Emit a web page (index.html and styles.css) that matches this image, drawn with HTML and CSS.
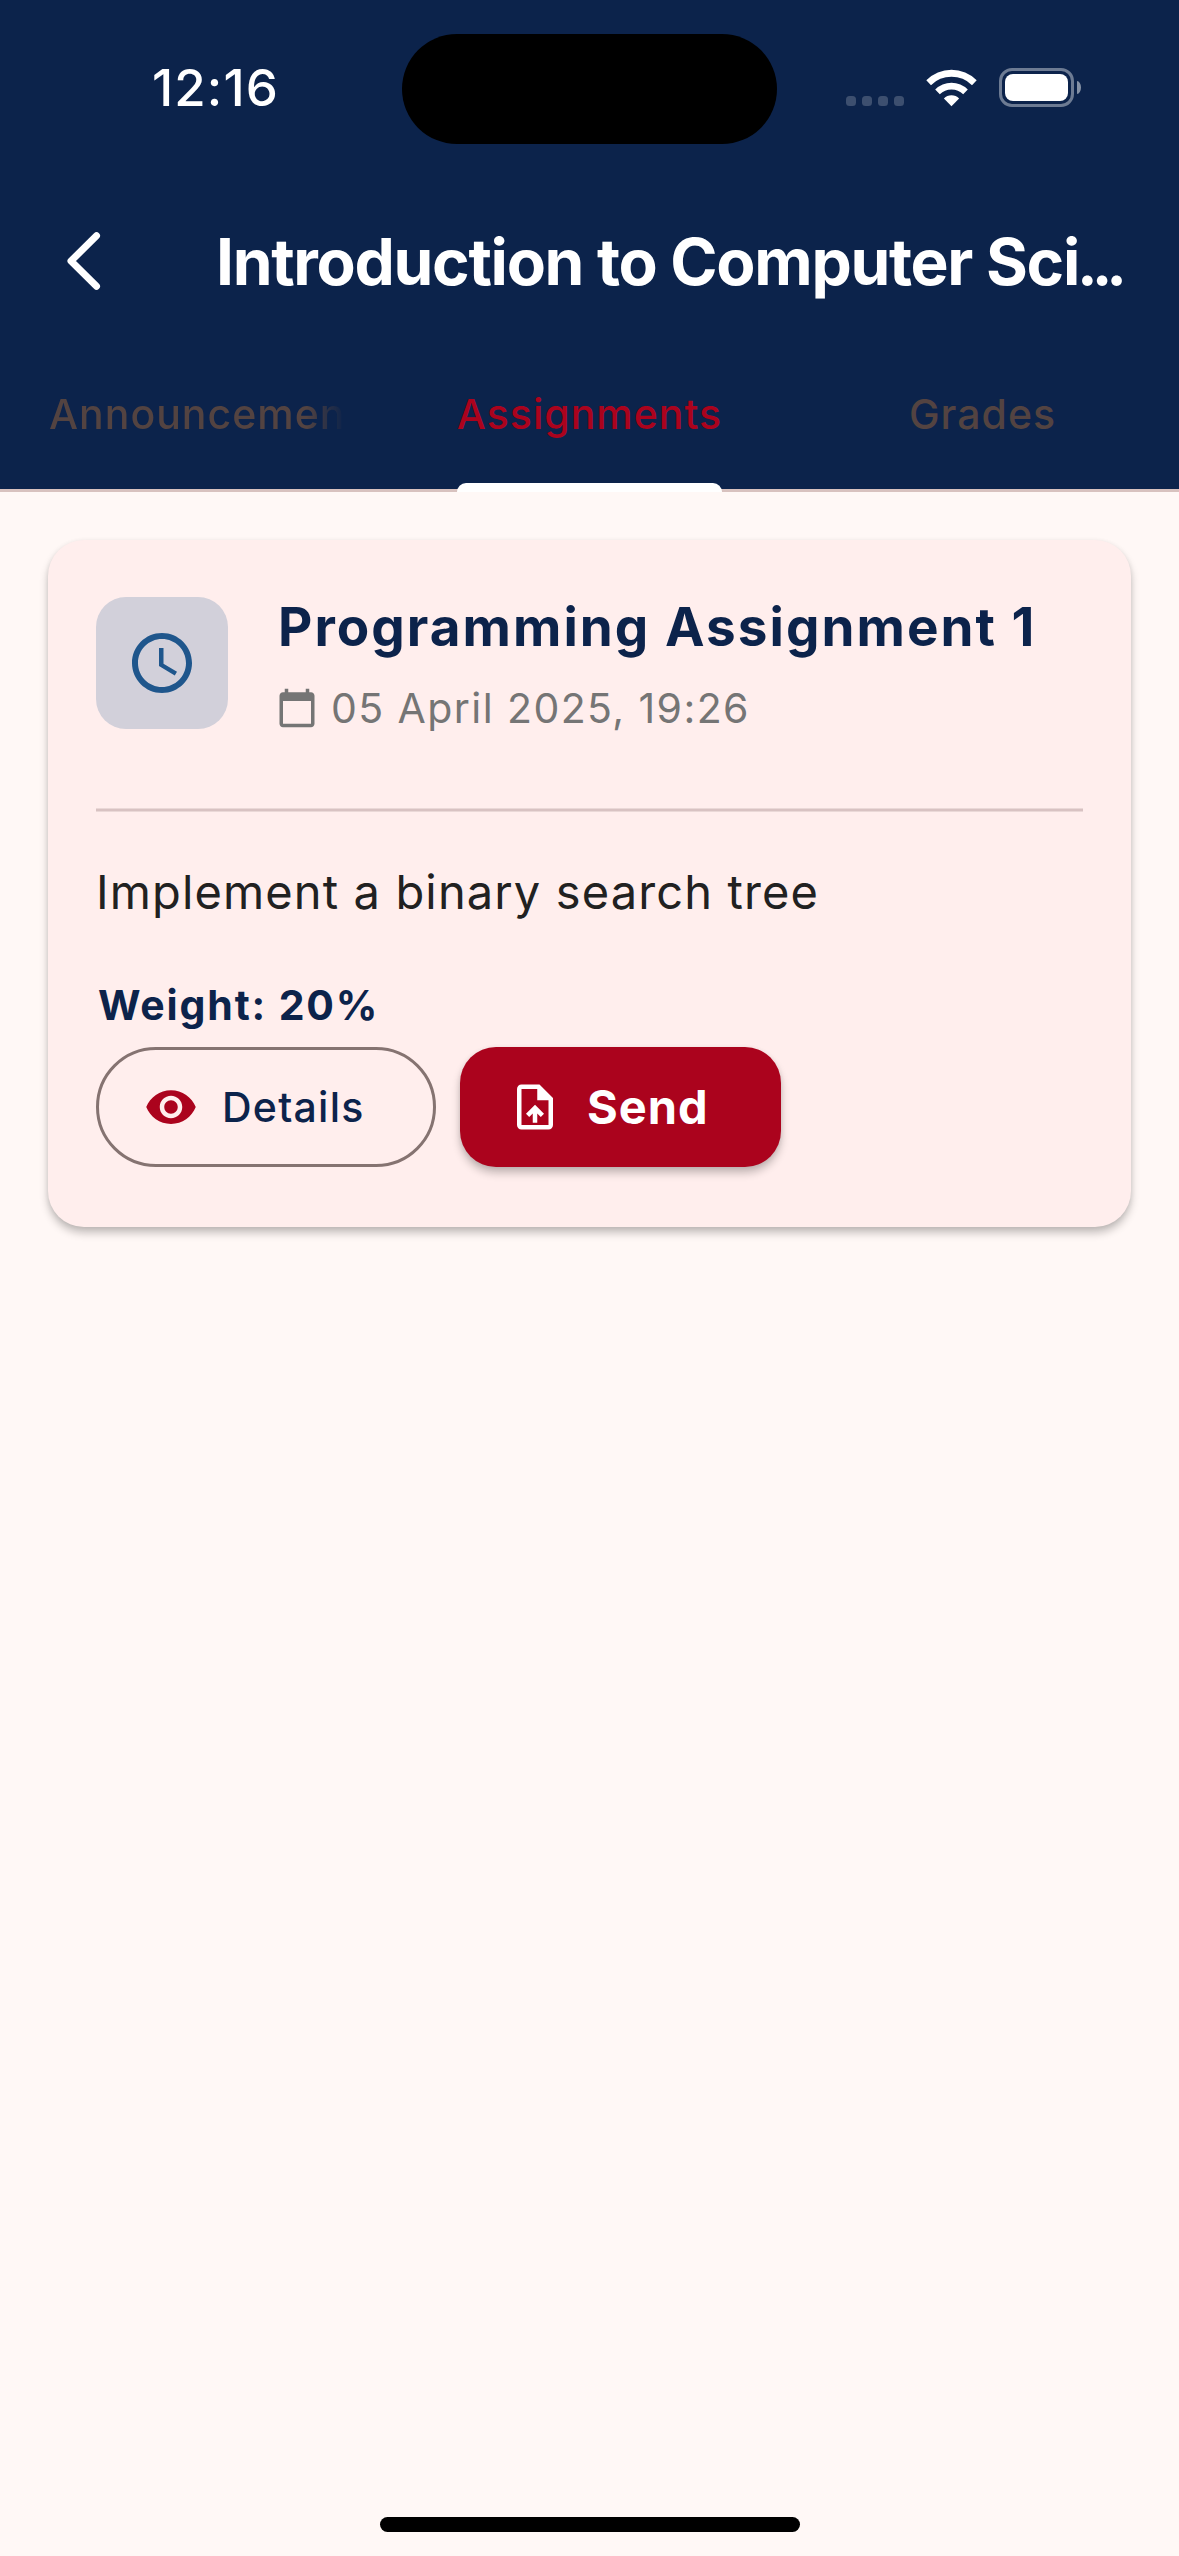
FILE: index.html
```html
<!DOCTYPE html>
<html lang="en">
<head>
<meta charset="utf-8">
<title>Introduction to Computer Science</title>
<link rel="stylesheet" href="styles.css">
</head>
<body>
<main class="screen">
  <header class="app-header">
    <div class="status-bar">
      <span class="clock">12:16</span>
      <div class="island"></div>
      <div class="indicators">
        <div class="cellular"><i class="dot"></i><i class="dot"></i><i class="dot"></i><i class="dot"></i></div>
        <svg class="wifi" viewBox="0 0 51 38" fill="#fff">
          <path d="M0.3 11.3A35.5 35.5 0 0 1 50.7 11.3L46 16.2A28.8 28.8 0 0 0 5 16.2Z"/>
          <path d="M9.2 20.4A23 23 0 0 1 41.8 20.4L37.2 25.2A16.6 16.6 0 0 0 13.8 25.2Z"/>
          <path d="M17.9 29.4A10.8 10.8 0 0 1 33.1 29.4L25.5 37.3Z"/>
        </svg>
        <div class="battery"><div class="battery-body"><div class="battery-level"></div></div><div class="battery-cap"></div></div>
      </div>
    </div>
    <div class="toolbar">
      <svg class="back" viewBox="0 0 34 58" fill="none" stroke="#fff" stroke-width="7" stroke-linecap="round" stroke-linejoin="round"><path d="M29.5 3.8L4 29L29.500 54.200"/></svg>
      <h1 class="title">Introduction to Computer Sci<span class="ellipsis">...</span></h1>
    </div>
    <nav class="tabs">
      <div class="tab"><span class="tab-label fade">Announcements</span></div>
      <div class="tab active"><span class="tab-label">Assignments</span></div>
      <div class="tab"><span class="tab-label">Grades</span></div>
    </nav>
  </header>
  <section class="content">
    <article class="card">
      <div class="card-head">
        <div class="badge"><svg viewBox="0 0 24 24" fill="#1f568c"><path d="M11.99 2C6.47 2 2 6.48 2 12s4.47 10 9.99 10C17.52 22 22 17.52 22 12S17.52 2 11.99 2zM12 20c-4.42 0-8-3.58-8-8s3.58-8 8-8 8 3.58 8 8-3.58 8-8 8zm.5-13H11v6l5.250 3.150.75-1.230-4.500-2.670z"/></svg></div>
        <div class="card-heading">
          <h2 class="card-title">Programming Assignment 1</h2>
          <div class="due">
            <svg class="calendar" viewBox="0 0 24 24" fill="#757575"><path d="M20 3h-1V1h-2v2H7V1H5v2H4c-1.100 0-2 .9-2 2v16c0 1.100.9 2 2 2h16c1.100 0 2-.9 2-2V5c0-1.100-.9-2-2-2zm0 18H4V8h16v13z"/></svg>
            <span class="due-date">05 April 2025, 19:26</span>
          </div>
        </div>
      </div>
      <div class="divider"></div>
      <p class="description">Implement a binary search tree</p>
      <p class="weight">Weight: 20%</p>
      <div class="actions">
        <button class="btn details"><svg viewBox="0 0 24 24" fill="#ab031d"><path d="M12 4.500C7 4.500 2.730 7.610 1 12c1.730 4.390 6 7.500 11 7.500s9.270-3.110 11-7.500c-1.730-4.390-6-7.500-11-7.500zM12 17c-2.760 0-5-2.240-5-5s2.240-5 5-5 5 2.240 5 5-2.240 5-5 5zm0-8c-1.660 0-3 1.340-3 3s1.340 3 3 3 3-1.340 3-3-1.340-3-3-3z"/></svg><span class="details-label">Details</span></button>
        <button class="btn send"><svg viewBox="0 0 24 24" fill="#fff"><path d="M14 2H6c-1.100 0-1.990.9-1.990 2L4 20c0 1.100.89 2 1.990 2H18c1.100 0 2-.9 2-2V8l-6-6zm4 18H6V4h7v5h5v11zM8 15.010l1.410 1.410L11 14.840V19h2v-4.160l1.590 1.590L16 15.010 12.010 11 8 15.010z"/></svg><span class="send-label">Send</span></button>
      </div>
    </article>
  </section>
  <div class="home-indicator"></div>
</main>
</body>
</html>
```
FILE: styles.css
```css
* { box-sizing: border-box; }
body { margin: 0; font-family: Inter, "Liberation Sans", sans-serif; background: #fff8f6; }
h1, h2, p { margin: 0; }
svg { display: block; flex: none; }

.screen { width: 1179px; height: 2556px; display: flex; flex-direction: column; overflow: hidden; }
.app-header { background: #0c234b; color: #fff; height: 492px; }

.status-bar { height: 177px; display: grid; grid-template-columns: 402px 375px 402px; align-items: start; }
.clock { margin: 58px 0 0 29px; text-align: center; font-size: 51px; line-height: 60px; font-weight: 550; letter-spacing: 1.1px; }
.island { height: 110px; margin-top: 34px; border-radius: 55px; background: #000; }
.indicators { display: flex; margin-top: 68px; padding-left: 69px; height: 39px; }
.cellular { display: flex; gap: 6px; padding-top: 28px; }
.dot { width: 10px; height: 10px; border-radius: 3.5px; background: #3d4f6f; }
.wifi { width: 51px; height: 38px; margin: 1px 0 0 22px; }
.battery { display: flex; align-items: center; gap: 3px; margin-left: 22px; }
.battery-body { width: 75px; height: 39px; padding: 3px; border: 3px solid #6d7b93; border-radius: 13px; }
.battery-level { height: 27px; border-radius: 8px; background: #fff; }
.battery-cap { width: 4px; height: 13px; border-radius: 0 4px 4px 0 / 0 6.5px 6.5px 0; background: #8591a5; }

.toolbar { height: 168px; display: flex; align-items: center; padding-left: 67px; }
.back { width: 34px; height: 58px; }
.title { margin: 2px 0 0 115px; font-size: 64px; line-height: 80px; font-weight: 650; white-space: nowrap; letter-spacing: -1.3px; }
.ellipsis { margin-left: -2px; font-size: 62px; letter-spacing: -6px; }

.tabs { height: 147px; display: grid; grid-template-columns: repeat(3, minmax(0, 1fr)); border-bottom: 3px solid #d8c2bf; }
.tab { display: flex; justify-content: center; padding: 0 48px; height: 147px; }
.tab-label { position: relative; height: 147px; line-height: 138px; font-size: 41px; font-weight: 500; color: #534341; white-space: nowrap; letter-spacing: 1px; }
.fade { flex: 1; min-width: 0; overflow: hidden; padding-left: 1px; -webkit-mask-image: linear-gradient(90deg, #000 87%, transparent 100%); mask-image: linear-gradient(90deg, #000 87%, transparent 100%); }
.active .tab-label { color: #ab031d; }
.active .tab-label::after { content: ""; position: absolute; inset: auto 0 0; height: 9px; border-radius: 9px 9px 0 0; background: #fff; }

.content { flex: 1; padding: 48px; }
.card { height: 687px; padding: 57px 48px 0; border-radius: 36px; background: #ffeeed; box-shadow: 0 6px 9px rgba(0,0,0,.23), 0 1px 5px rgba(0,0,0,.07); }
.card-head { display: flex; gap: 48px; height: 211px; }
.badge { width: 132px; height: 132px; padding: 30px; border-radius: 30px; background: #d2d0da; }
.badge svg { width: 72px; height: 72px; }
.card-title { margin: -8px 0 0 2px; font-size: 53px; line-height: 76px; font-weight: 700; color: #0c234b; white-space: nowrap; letter-spacing: 2.05px; }
.due { display: flex; align-items: center; gap: 13px; margin-top: 13px; height: 60px; }
.calendar { width: 42px; height: 42px; }
.due-date { font-size: 41px; line-height: 60px; color: #757575; letter-spacing: 1.42px; }
.divider { height: 4px; background: linear-gradient(#ead8d7 25%, #d8c2c2 25% 75%, #ead8d7 75%); }
.description { margin-top: 44px; font-size: 47px; line-height: 72px; color: #212121; letter-spacing: 1.13px; }
.weight { margin: 47px 0 0 2px; font-size: 41px; line-height: 60px; font-weight: 650; color: #0c234b; letter-spacing: 1.85px; }
.actions { display: flex; gap: 24px; margin-top: 12px; }
.btn { height: 120px; display: flex; align-items: center; font-family: inherit; border: 0; padding: 0; }
.btn svg { width: 54px; height: 54px; }
.details { width: 340px; padding-left: 45px; gap: 24px; border: 3px solid #857371; border-radius: 60px; background: none; color: #0c234b; }
.details-label { font-size: 41px; font-weight: 500; letter-spacing: 1.25px; }
.send { width: 321px; padding-left: 48px; gap: 25px; border-radius: 36px; background: #ab031d; color: #fff; box-shadow: 0 6px 9px rgba(0,0,0,.23), 0 1px 5px rgba(0,0,0,.07); }
.send-label { margin-bottom: 2px; font-size: 47px; font-weight: 700; letter-spacing: 1px; }
.home-indicator { width: 420px; height: 15px; margin: 0 auto 24px; border-radius: 8px; background: #000; }
```
